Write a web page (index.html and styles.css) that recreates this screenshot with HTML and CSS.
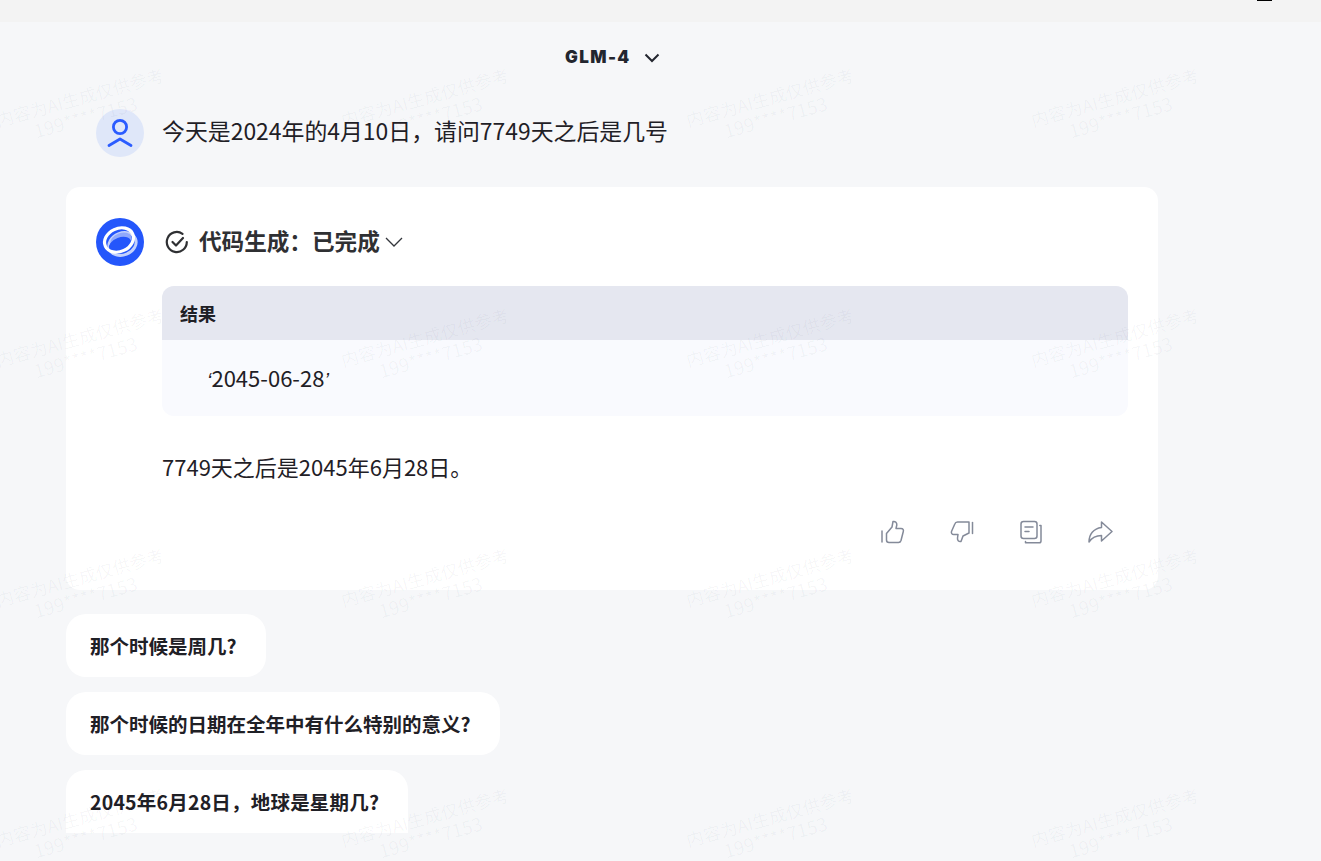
FILE: index.html
```html
<!DOCTYPE html>
<html lang="zh-CN">
<head>
<meta charset="utf-8">
<title>GLM-4</title>
<link rel="stylesheet" href="styles.css">
</head>
<body>
<div class="topbar"><span class="topmark"></span></div>
<main class="chat">
  <header class="model"><span class="model-name">GLM-4</span>
    <svg class="model-chev" width="16" height="10" viewBox="0 0 16 10"><path d="M1.500 1.500 8 8l6.500-6.500" fill="none" stroke="#23262f" stroke-width="2"/></svg>
  </header>
  <section class="user-row">
    <div class="avatar">
      <svg width="48" height="48" viewBox="0 0 48 48"><circle cx="24" cy="18" r="6.600" fill="none" stroke="#2b5cff" stroke-width="2.800"/><path d="M13 36.500 24 30l11 6.500" fill="none" stroke="#2b5cff" stroke-width="2.800" stroke-linecap="round" stroke-linejoin="round"/></svg>
    </div>
    <p class="user-text">今天是2024年的4月10日&#xFF0C;请问7749天之后是几号</p>
  </section>
  <section class="card">
    <div class="logo">
      <svg width="48" height="48" viewBox="0 0 48 48"><circle cx="24" cy="24" r="24" fill="#2456fb"/><ellipse cx="26.500" cy="26" rx="14" ry="11" transform="rotate(-22 26.500 26)" fill="none" stroke="#c3d1fc" stroke-width="3"/><ellipse cx="25" cy="22" rx="11" ry="7" transform="rotate(-20 25 22)" fill="#90a9fb"/><ellipse cx="24" cy="26.500" rx="11.500" ry="7" transform="rotate(-20 24 26.500)" fill="#2456fb"/><ellipse cx="23" cy="22" rx="15" ry="11.500" transform="rotate(-25 23 22)" fill="none" stroke="#fff" stroke-width="3.200"/></svg>
    </div>
    <div class="body">
      <div class="step">
        <svg class="step-check" width="24" height="24" viewBox="0 0 24 24"><path d="M21.800 12A10 10 0 1 1 17.500 3.800" fill="none" stroke="#2f3033" stroke-width="2.200" stroke-linecap="round"/><path d="m7.500 12 3.500 3.500 7-7.500" fill="none" stroke="#2f3033" stroke-width="2.200" stroke-linecap="round" stroke-linejoin="round"/></svg>
        <h2 class="step-title">代码生成&#xFF1A;已完成</h2>
        <svg class="step-chev" width="18" height="10" viewBox="0 0 18 10"><path d="M1 1l8 8 8-8" fill="none" stroke="#33363c" stroke-width="1.300"/></svg>
      </div>
      <div class="result">
        <div class="result-head">结果</div>
        <div class="result-body"><span class="quote">‘</span>2045-06-28<span class="quote">’</span></div>
      </div>
      <p class="answer">7749天之后是2045年6月28日。</p>
      <div class="actions">
        <svg width="26" height="26" viewBox="0 0 26 26" fill="none" stroke="#848a99" stroke-width="1.500" stroke-linejoin="round" stroke-linecap="round"><path d="M2 12v11"/><path d="M6.500 14.500 12 8l1-5.500c2.500-.5 4 1.500 3.800 3.500L16 9.500h5c2 0 2.800 1.500 2.300 3L21 21.500c-.4 1.300-1.300 2-2.500 2H9c-1.500 0-2.500-1-2.500-2.500z"/></svg>
        <svg width="26" height="26" viewBox="0 0 26 26" fill="none" stroke="#848a99" stroke-width="1.500" stroke-linejoin="round" stroke-linecap="round"><path d="M23.500 3.500v11"/><path d="M20 3H8.500C7 3 6.200 3.800 5.800 5L2.500 12.500c-.5 1.500.5 3 2.200 3H9l-.5 3.500c-.2 2 1 4 3.500 3.500l2-5.500 6-3z"/></svg>
        <svg width="26" height="26" viewBox="0 0 26 26" fill="none" stroke="#848a99" stroke-width="1.500" stroke-linejoin="round" stroke-linecap="round"><rect x="3" y="2.500" width="16" height="17" rx="2.500"/><path d="M7 8h8M7 12.500h4"/><path d="M21.800 6.500H23v15.500c0 1-.8 1.800-1.800 1.800H7.500v-1.300"/></svg>
        <svg width="26" height="26" viewBox="0 0 26 26" fill="none" stroke="#848a99" stroke-width="1.500" stroke-linejoin="round" stroke-linecap="round"><path d="M14.500 3 25 12.500l-10.500 9.500v-5.500C9 16.500 5 18.500 2 23c0-7.500 4.500-13.500 12.500-14.500z"/></svg>
      </div>
    </div>
  </section>
  <ul class="suggests">
    <li class="pill">那个时候是周几?</li>
    <li class="pill">那个时候的日期在全年中有什么特别的意义?</li>
    <li class="pill pill-last">2045年6月28日&#xFF0C;地球是星期几?</li>
  </ul>
</main>
<div class="marks" aria-hidden="true">
  <div class="mark">内容为AI生成仅供参考<br><span class="mark-id">199****7153</span></div>
  <div class="mark">内容为AI生成仅供参考<br><span class="mark-id">199****7153</span></div>
  <div class="mark">内容为AI生成仅供参考<br><span class="mark-id">199****7153</span></div>
  <div class="mark">内容为AI生成仅供参考<br><span class="mark-id">199****7153</span></div>
  <div class="mark">内容为AI生成仅供参考<br><span class="mark-id">199****7153</span></div>
  <div class="mark">内容为AI生成仅供参考<br><span class="mark-id">199****7153</span></div>
  <div class="mark">内容为AI生成仅供参考<br><span class="mark-id">199****7153</span></div>
  <div class="mark">内容为AI生成仅供参考<br><span class="mark-id">199****7153</span></div>
  <div class="mark">内容为AI生成仅供参考<br><span class="mark-id">199****7153</span></div>
  <div class="mark">内容为AI生成仅供参考<br><span class="mark-id">199****7153</span></div>
  <div class="mark">内容为AI生成仅供参考<br><span class="mark-id">199****7153</span></div>
  <div class="mark">内容为AI生成仅供参考<br><span class="mark-id">199****7153</span></div>
  <div class="mark">内容为AI生成仅供参考<br><span class="mark-id">199****7153</span></div>
  <div class="mark">内容为AI生成仅供参考<br><span class="mark-id">199****7153</span></div>
  <div class="mark">内容为AI生成仅供参考<br><span class="mark-id">199****7153</span></div>
  <div class="mark">内容为AI生成仅供参考<br><span class="mark-id">199****7153</span></div>
</div>
</body>
</html>
```
FILE: styles.css
```css
* { box-sizing: border-box; }
html, body { margin: 0; height: 100%; overflow: hidden; }
body {
  position: relative;
  background: #f6f7f9;
  color: #1f2026;
  font-family: "Noto Sans CJK SC", "Noto Sans", sans-serif;
}
.topbar {
  height: 22px;
  background: #f3f3f3;
  display: flex;
  justify-content: flex-end;
  padding-right: 49px;
}
.topmark { width: 15px; height: 1px; background: #000; }
.chat { padding: 0 163px 0 66px; }
.model {
  height: 70px;
  padding-left: 499px;
  display: flex;
  align-items: center;
  gap: 13px;
}
.model-name {
  font-family: Inter, sans-serif;
  font-weight: 900;
  font-size: 17px;
  letter-spacing: 1.400px;
  color: #23262f;
}
.model-chev { margin-top: 1px; }
.user-row {
  display: flex;
  align-items: center;
  gap: 18px;
  padding: 17px 0 0 30px;
  height: 65px;
}
.avatar {
  width: 48px;
  height: 48px;
  flex: none;
  border-radius: 50%;
  background: #dfe7f9;
}
.avatar svg { display: block; }
.user-text { margin: 0 0 6px; font-size: 22.900px; line-height: 32px; }
.card {
  margin-top: 30px;
  height: 403px;
  background: #fff;
  border-radius: 14px;
  padding: 31px 30px 0;
  display: flex;
  gap: 18px;
}
.logo { width: 48px; height: 48px; flex: none; }
.body { flex: 1; min-width: 0; }
.step {
  height: 48px;
  display: flex;
  align-items: center;
  padding-left: 3px;
}
.step-title {
  margin: 0 5px 3px 10px;
  font-size: 22.600px;
  font-weight: 700;
  color: #2f3033;
}
.result {
  margin-top: 20px;
  border-radius: 12px;
  overflow: hidden;
  background: #f9fafe;
}
.result-head {
  height: 54px;
  padding-left: 18px;
  background: #e5e7f0;
  font-size: 18px;
  font-weight: 700;
  line-height: 54px;
}
.result-body {
  height: 76px;
  padding-left: 45px;
  font-size: 22px;
  line-height: 74px;
}
.quote { font-family: "Liberation Sans", sans-serif; font-style: italic; font-size: 20px; }
.answer { margin: 34px 0 0; font-size: 22px; line-height: 32px; }
.actions {
  margin-top: 37px;
  display: flex;
  justify-content: flex-end;
  gap: 43px;
  padding-right: 15px;
}
.suggests {
  list-style: none;
  margin: 24px 0 0;
  padding: 0;
  display: flex;
  flex-direction: column;
  align-items: flex-start;
  gap: 15px;
}
.pill {
  height: 63px;
  padding: 0 29px 0 24px;
  background: #fff;
  border-radius: 20px;
  font-size: 19.500px;
  font-weight: 700;
  line-height: 63px;
}
.pill-last { border-radius: 20px 20px 0 0; letter-spacing: 0.200px; }
.marks {
  position: absolute;
  inset: 0;
  display: grid;
  grid-template-columns: repeat(4, 345px);
  grid-auto-rows: 240px;
  pointer-events: none;
}
.mark {
  justify-self: center;
  align-self: center;
  transform: translate(-90px, -13px) rotate(-15.500deg);
  text-align: center;
  font-size: 17.500px;
  line-height: 21px;
  white-space: nowrap;
  color: rgba(20, 30, 60, 0.04);
}
.mark-id { font-size: 18.500px; }
```
